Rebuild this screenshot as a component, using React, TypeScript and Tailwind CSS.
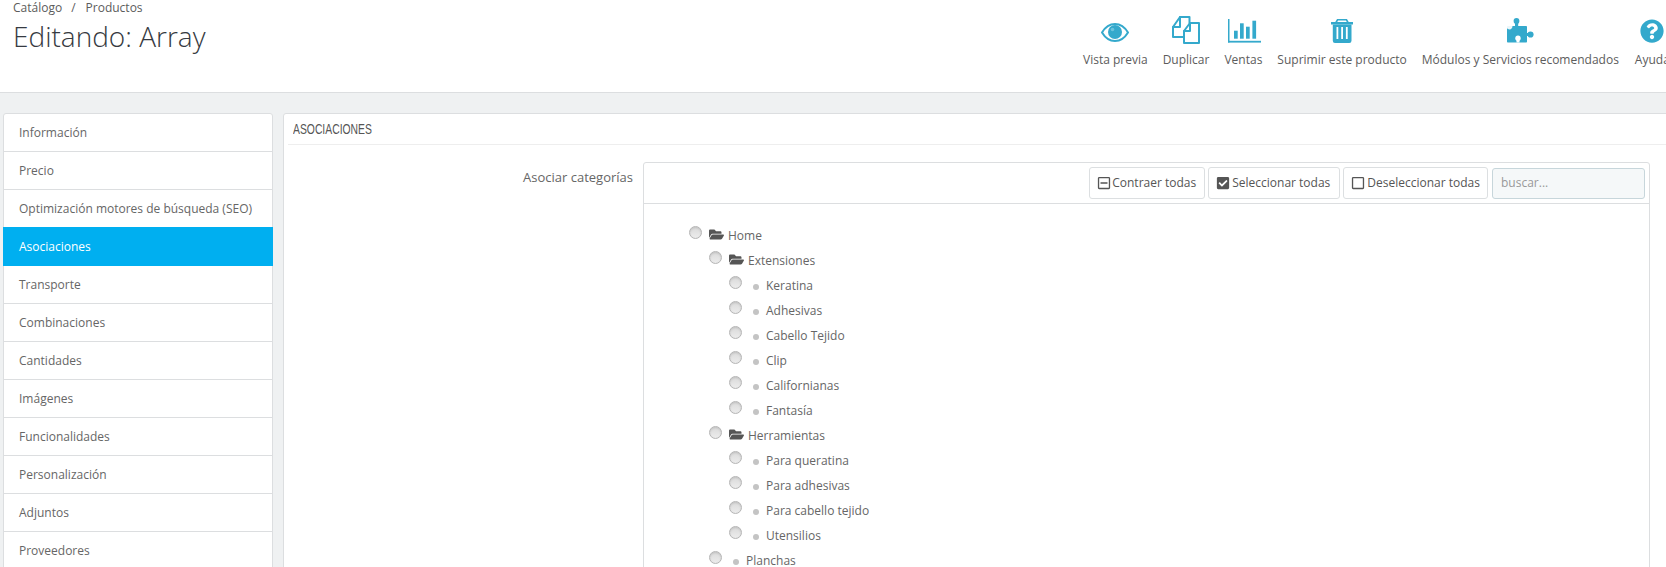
import React from "react";
import { FaQuestionCircle, FaFolderOpen, FaCheckSquare, FaRegSquare, FaRegMinusSquare } from "react-icons/fa";

const blue = "#34a9cc";

const Eye = () => (
  <svg width="28" height="19" viewBox="0 0 28 19" className="mt-[3px]">
    <path d="M1 9.500C4 4.500 8.500 1 14 1s10 3.500 13 8.500C24 14.500 19.500 18 14 18S4 14.500 1 9.500z" fill="none" stroke={blue} strokeWidth="2" />
    <circle cx="14" cy="9" r="7" fill={blue} />
    <circle cx="11.500" cy="6.500" r="1.800" fill="#6cc3dd" />
  </svg>
);

const Files = () => (
  <svg width="28" height="28" viewBox="0 0 28 28" fill="none" stroke={blue} strokeWidth="2" strokeLinejoin="round" strokeLinecap="round" className="-mt-[1px]">
    <path d="M8 1h9.500v6M8 1L1 11v10h11" />
    <path d="M8 1v10H1" />
    <path d="M18 7h9v20H12V15z" />
    <path d="M18 7v8h-6" />
  </svg>
);

const Bars = () => (
  <svg width="33" height="24" viewBox="0 0 33 24" fill={blue} className="ml-[3px]">
    <rect x="0" y="0" width="1.500" height="23.500" />
    <rect x="0" y="21.800" width="33" height="1.800" />
    <rect x="6" y="11.700" width="3.700" height="8" />
    <rect x="12" y="4.300" width="3.700" height="15.400" />
    <rect x="18" y="7.700" width="3.700" height="12" />
    <rect x="24.400" y="1.700" width="3.700" height="18" />
  </svg>
);

const Trash = () => (
  <svg width="22" height="24" viewBox="0 0 22 24" fill={blue}>
    <path d="M5 3.500L6.500 0.800H15.500L17 3.500" fill="none" stroke={blue} strokeWidth="1.600" />
    <rect x="0" y="3" width="22" height="2.500" />
    <path fillRule="evenodd" d="M1.800 5.500H20.500V21.800A2.200 2.200 0 0 1 18.300 24H4A2.200 2.200 0 0 1 1.800 21.800zM5.500 8V20H7.300V8zM10.200 8V20H12V8zM14.900 8V20H16.700V8z" />
  </svg>
);

const Puzzle = () => (
  <svg width="27" height="25" viewBox="0 0 27 25" fill={blue}>
    <rect x="0" y="8" width="20" height="16.500" rx="0.800" />
    <rect x="8" y="3" width="3.200" height="6" />
    <circle cx="9.500" cy="2.900" r="2.900" />
    <rect x="19" y="15" width="4" height="3" />
    <circle cx="23.500" cy="16.500" r="3.100" />
    <path d="M0 8h5.500c0 2-1.500 3.500-2.800 3.500S0 10.500 0 10z" fill="#ffffff" opacity="0.9" />
    <circle cx="11" cy="20.200" r="2.700" fill="#ffffff" />
    <rect x="9.500" y="21" width="3" height="3.500" fill="#ffffff" />
  </svg>
);

const toolbar: [string, React.ReactNode, string][] = [
  ["Vista previa", <Eye />, "ml-[1px]"],
  ["Duplicar", <Files />, "-ml-[1px]"],
  ["Ventas", <Bars />, "-ml-[1px]"],
  ["Suprimir este producto", <Trash />, "-ml-[1px]"],
  ["Módulos y Servicios recomendados", <Puzzle />, "-ml-[1px]"],
  ["Ayuda", <FaQuestionCircle size={24} color={blue} />, ""],
];

const tabs = [
  "Información", "Precio", "Optimización motores de búsqueda (SEO)", "Asociaciones", "Transporte", "Combinaciones",
  "Cantidades", "Imágenes", "Funcionalidades", "Personalización", "Adjuntos", "Proveedores",
];

const tree: [number, string, boolean][] = [
  [0, "Home", true],
  [1, "Extensiones", true],
  [2, "Keratina", false],
  [2, "Adhesivas", false],
  [2, "Cabello Tejido", false],
  [2, "Clip", false],
  [2, "Californianas", false],
  [2, "Fantasía", false],
  [1, "Herramientas", true],
  [2, "Para queratina", false],
  [2, "Para adhesivas", false],
  [2, "Para cabello tejido", false],
  [2, "Utensilios", false],
  [1, "Planchas", false],
];

const indent = ["pl-[45px]", "pl-[65px]", "pl-[85px]"];

function Btn({ icon, label, cls }: { icon: React.ReactNode; label: string; cls: string }) {
  return (
    <div className={`h-[32px] shrink-0 flex items-center pl-[7px] border border-[#dcdfe1] rounded-[3px] bg-white text-[#555] ${cls}`}>
      {icon}
      <span>{label}</span>
    </div>
  );
}

export default function App() {
  return (
    <div className="h-[567px] w-[1666px] overflow-hidden bg-[#eff1f2] text-[12px] text-[#666] font-['Open_Sans',sans-serif]">
      <header className="h-[93px] bg-white border-b border-[#dcdee0] flex">
        <div className="w-[1074px] shrink-0 pl-[13px] pt-[1px]">
          <div className="h-[14px] leading-[14px] flex gap-[9px] text-[#5c5c5c]">
            <span>Catálogo</span><span>/</span><span className="ml-[1px]">Productos</span>
          </div>
          <h1 className="mt-[3px] text-[28px] leading-[36px] font-light text-[#363a41]">Editando: Array</h1>
        </div>
        <div className="flex shrink-0 pt-[13px]">
          {toolbar.map(([label, icon, shift]) => (
            <div key={label} className={`px-[8px] shrink-0 flex flex-col items-center ${shift}`}>
              <div className="h-[35px] flex items-center justify-center">{icon}</div>
              <div className="leading-[16px] mt-[4px] text-[#5c5c5c] whitespace-nowrap">{label}</div>
            </div>
          ))}
        </div>
      </header>

      <main className="flex items-start gap-[10px] pl-[3px] pt-[20px]">
        <nav className="w-[270px] shrink-0 bg-white border border-[#dcdee0] rounded-t-[3px]">
          {tabs.map((t) =>
            t === "Asociaciones" ? (
              <div key={t} className="h-[39px] -mx-[1px] pl-[16px] flex items-center bg-[#00aff0] text-white -mt-[1px] pt-[1px]">{t}</div>
            ) : (
              <div key={t} className="h-[38px] pl-[15px] flex items-center border-b border-[#dcdee0]">{t}</div>
            )
          )}
        </nav>

        <section className="w-[1500px] shrink-0 bg-white border border-[#dcdee0] rounded-t-[3px] px-[4px] h-[600px]">
          <h3 className="h-[31px] border-b border-[#eeeeee] pl-[5px] flex items-center text-[14px] text-[#555] font-['Liberation_Sans',sans-serif]">
            <span className="inline-block origin-left scale-x-[0.74]">ASOCIACIONES</span>
          </h3>
          <div className="flex pt-[17px]">
            <label className="w-[355px] shrink-0 text-right pr-[10px] pt-[6px] text-[13px] leading-[18px] text-[#666]">Asociar categorías</label>
            <div className="w-[1007px] shrink-0 border border-[#dcdee0] rounded-t-[3px] h-[500px]">
              <div className="h-[41px] border-b border-[#dcdee0] flex items-center justify-end gap-[3px] pr-[4px]">
                <Btn icon={<FaRegMinusSquare size={14} className="mr-[1px]" />} label="Contraer todas" cls="pr-[8px]" />
                <Btn icon={<FaCheckSquare size={14} className="mr-[2px]" />} label="Seleccionar todas" cls="pr-[9px]" />
                <Btn icon={<FaRegSquare size={14} className="mr-[2px]" />} label="Deseleccionar todas" cls="pr-[7px]" />
                <div className="ml-[1px] w-[153px] h-[31px] bg-[#f5f8f9] border border-[#c7d6db] rounded-[3px] px-[8px] flex items-center text-[#999]">buscar...</div>
              </div>
              <ul className="pt-[19px]">
                {tree.map(([lvl, name, folder]) => (
                  <li key={name} className={`h-[25px] flex items-center ${indent[lvl]}`}>
                    <span className="w-[13px] h-[13px] shrink-0 -mt-[6px] rounded-full border border-[#b5b5b5] bg-linear-to-b from-[#dadada] to-[#ececec] shadow-[inset_0_1px_2px_rgba(0,0,0,0.12)]" />
                    {folder ? (
                      <>
                        <FaFolderOpen size={15} color="#555" className="ml-[7px] mr-[4px] shrink-0 -mt-[2px]" />
                        <span>{name}</span>
                      </>
                    ) : (
                      <>
                        <span className="ml-[11px] mr-[7px] w-[6px] h-[6px] rounded-full bg-[#c4c4c4] shrink-0 mt-[2px]" />
                        <span>{name}</span>
                      </>
                    )}
                  </li>
                ))}
              </ul>
            </div>
          </div>
        </section>
      </main>
    </div>
  );
}
